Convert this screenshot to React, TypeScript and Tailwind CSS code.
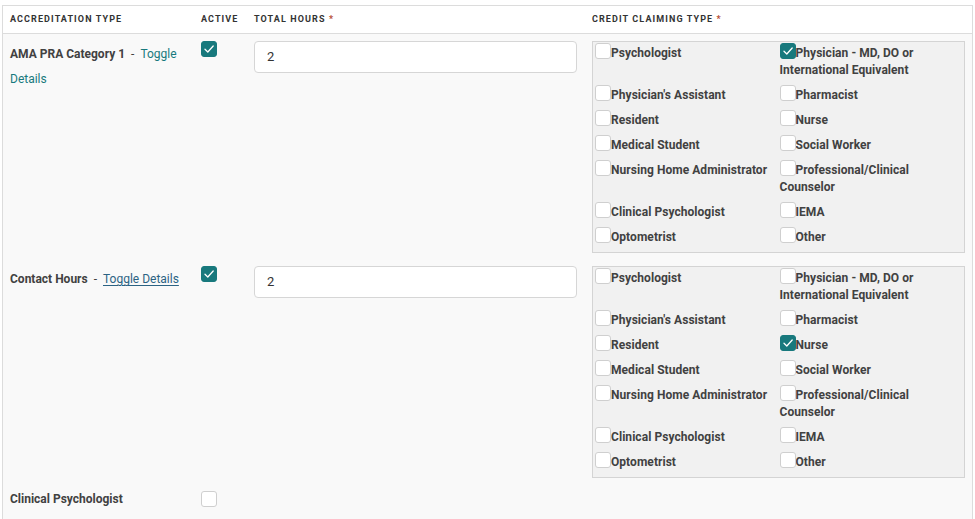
import React from "react";

function Box({ checked, lift }: { checked?: boolean; lift?: boolean }) {
  return (
    <span
      className={
        "inline-flex align-top items-center justify-center w-4 h-4 rounded-[3px] border " +
        (lift ? "relative -top-[2px] " : "") +
        (checked ? "bg-[#18797d] border-[#18797d]" : "bg-white border-[#cfcfcf]")
      }
    >
      {checked && (
        <svg width="12" height="12" viewBox="0 0 12 12" fill="none">
          <path d="M2 6.3 L4.8 9 L10.2 3" stroke="white" strokeWidth="1.3" strokeLinecap="round" strokeLinejoin="round" />
        </svg>
      )}
    </span>
  );
}

const items: [string, string][] = [
  ["Psychologist", "Physician - MD, DO or International Equivalent"],
  ["Physician's Assistant", "Pharmacist"],
  ["Resident", "Nurse"],
  ["Medical Student", "Social Worker"],
  ["Nursing Home Administrator", "Professional/Clinical Counselor"],
  ["Clinical Psychologist", "IEMA"],
  ["Optometrist", "Other"],
];

function CreditBox({ checked }: { checked: string[] }) {
  const flat = items.flat();
  return (
    <div className="border border-[#d4d4d4] bg-[#f1f1f1] pt-[1px] pl-[2px] grid grid-cols-2">
      {flat.map((t) => (
        <div key={t} className="pt-[2px] pb-[6px] text-[12px] leading-[17px] font-bold text-[#414141] pr-1 tracking-[0.05px]">
          <Box checked={checked.includes(t)} lift />
          {t}
        </div>
      ))}
    </div>
  );
}

function Row({
  title,
  link,
  underline,
  checked,
  credit,
}: {
  title: string;
  link?: boolean;
  underline?: boolean;
  checked: boolean;
  credit?: string[];
}) {
  return (
    <div className="grid grid-cols-[191px_53px_338px_1fr] pt-[7px] pb-[6px]">
      <div className="pl-[7px] pr-2">
        {link ? (
          <div className="text-[12px] leading-[25px] text-[#414141] pt-[1px]">
            <span className="font-bold">{title}</span>
            <span className="mx-[6px]">-</span>
            <span
              className={
                underline
                  ? "text-[#2c6383] underline underline-offset-2"
                  : "text-[#18797d]"
              }
            >
              Toggle Details
            </span>
          </div>
        ) : (
          <div className="text-[12px] leading-[16px] font-bold text-[#414141]">{title}</div>
        )}
      </div>
      <div className="pl-[7px]">
        <Box checked={checked} />
      </div>
      <div className="pl-[7px] pr-[8px]">
        {credit && (
          <div className="h-[32px] bg-white border border-[#d6d6d6] rounded-[4px] pl-[12px] flex items-center text-[13px] text-[#333]">
            2
          </div>
        )}
      </div>
      <div className="pl-[7px] pr-[7px]">{credit && <CreditBox checked={credit} />}</div>
    </div>
  );
}

export default function App() {
  return (
    <div className="w-[975px] h-[519px] bg-white overflow-hidden" style={{ fontFamily: "Roboto, 'Liberation Sans', sans-serif" }}>
      <div className="ml-[2px] mt-[5px] w-[971px] border-l border-r border-t border-[#dcdcdc] bg-[#f9f9f9] h-[600px]">
        <div className="grid grid-cols-[191px_53px_338px_1fr] h-[28px] bg-white border-b border-[#dcdcdc] items-center text-[9px] font-bold tracking-[1.1px] text-[#333] uppercase">
          <div className="pl-[7px]">Accreditation Type</div>
          <div className="pl-[7px]">Active</div>
          <div className="pl-[7px]">
            Total Hours <span className="text-[#b5482f]">*</span>
          </div>
          <div className="pl-[7px]">
            Credit Claiming Type <span className="text-[#b5482f]">*</span>
          </div>
        </div>
        <Row title="AMA PRA Category 1" link checked credit={["Physician - MD, DO or International Equivalent"]} />
        <Row title="Contact Hours" link underline checked credit={["Nurse"]} />
        <Row title="Clinical Psychologist" checked={false} />
      </div>
    </div>
  );
}
